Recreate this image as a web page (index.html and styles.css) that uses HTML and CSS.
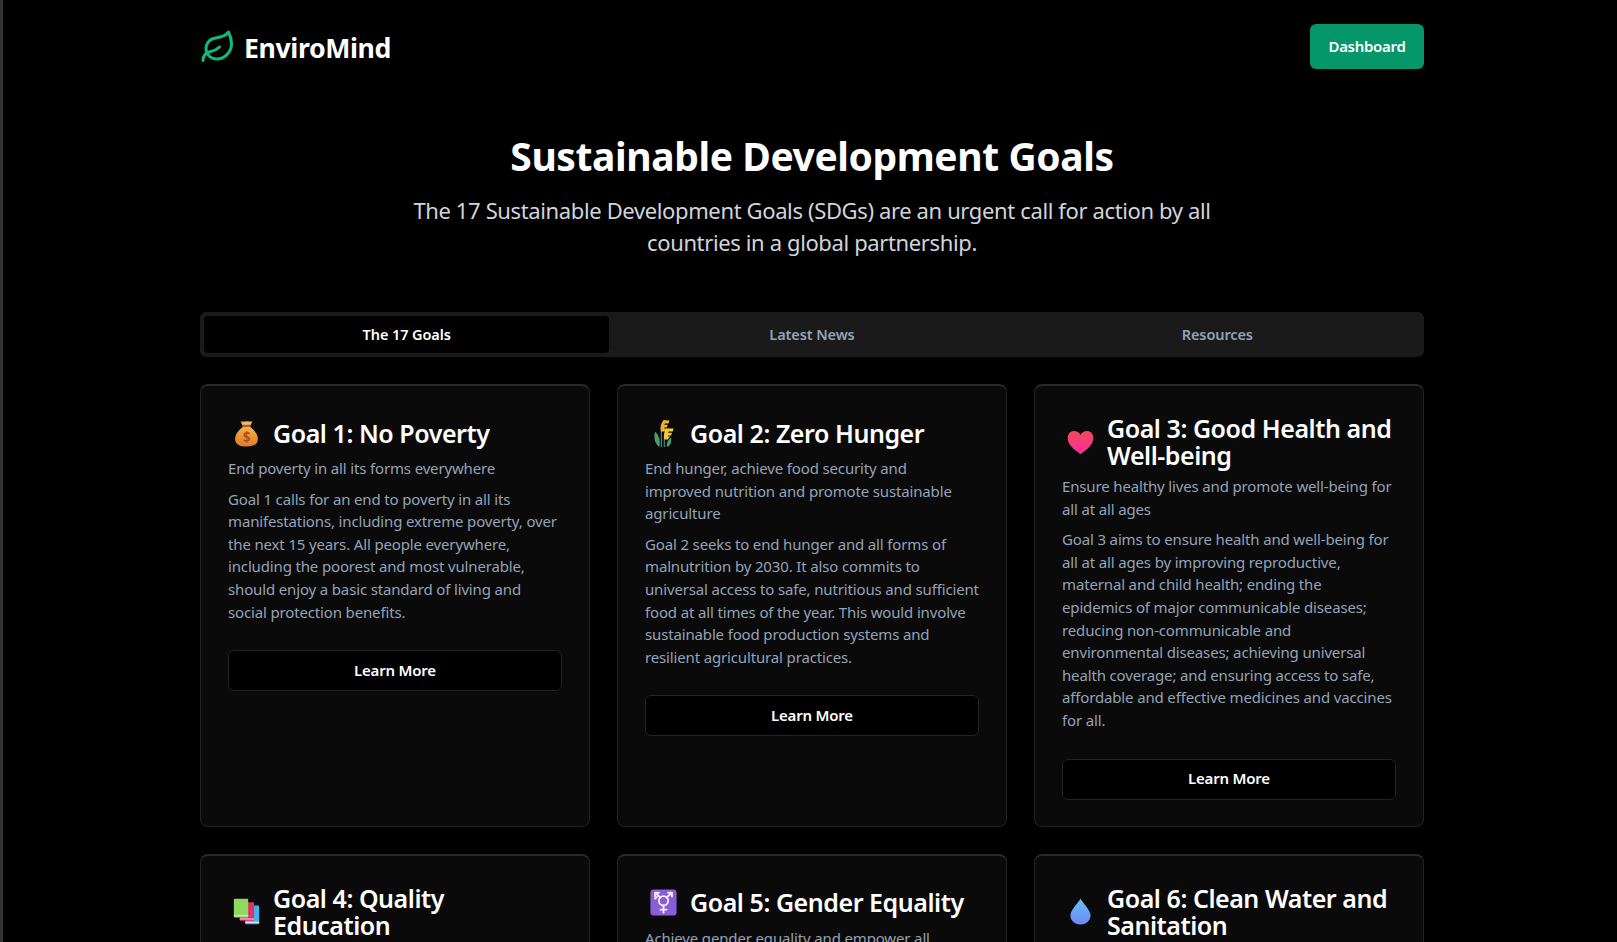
FILE: index.html
```html
<!DOCTYPE html>
<html lang="en">
<head>
  <meta charset="UTF-8">
  <meta name="viewport" content="width=device-width, initial-scale=1.0">
  <title>EnviroMind - Sustainable Development Goals</title>
  <link rel="stylesheet" href="styles.css">
</head>
<body>
  <div class="page">
    <!-- Header -->
    <header class="site-header">
      <a class="brand" href="#">
        <svg class="brand-icon" viewBox="0 0 24 24" fill="none" stroke="currentColor" stroke-width="2" stroke-linecap="round" stroke-linejoin="round">
          <path d="M11 20A7 7 0 0 1 9.8 6.1C15.5 5 17 4.48 19 2c1 2 2 4.18 2 8 0 5.5-4.78 10-10 10Z"/>
          <path d="M2 21c0-3 1.85-5.36 5.08-6C9.5 14.52 12 13 13 12"/>
        </svg>
        <span class="brand-name">EnviroMind</span>
      </a>
      <a class="dash-button" href="#">Dashboard</a>
    </header>

    <!-- Intro -->
    <section class="intro">
      <h1>Sustainable Development Goals</h1>
      <p>The 17 Sustainable Development Goals (SDGs) are an urgent call for action by all countries in a global partnership.</p>
    </section>

    <!-- Tabs -->
    <nav class="tabs">
      <button class="tab active">The 17 Goals</button>
      <button class="tab">Latest News</button>
      <button class="tab">Resources</button>
    </nav>

    <!-- Goals -->
    <main class="goal-grid">
      <article class="goal-card">
        <div class="goal-head">
          <svg class="goal-icon" viewBox="0 0 32 32">
            <defs>
              <linearGradient id="bag-fill" x1="0" y1="0" x2="0" y2="1">
                <stop offset="0" stop-color="#f7b048"/>
                <stop offset="1" stop-color="#e07a2c"/>
              </linearGradient>
            </defs>
            <path d="M11 6 9 1.500c2.500 1 4.500 .3 7 0s4.500 .8 7 0L21 6Z" fill="#f4b860"/>
            <path d="M12 8C7 11.500 2.500 17 2.500 22.500 2.500 29 8 31.500 16 31.500S29.500 29 29.500 22.500C29.500 17 25 11.500 20 8Z" fill="url(#bag-fill)"/>
            <rect x="11" y="5.600" width="10" height="2.800" rx="1.200" fill="#a9602c"/>
            <text x="16" y="26" class="bag-mark">$</text>
          </svg>
          <h2>Goal 1: No Poverty</h2>
        </div>
        <p class="goal-lead">End poverty in all its forms everywhere</p>
        <p class="goal-text">Goal 1 calls for an end to poverty in all its manifestations, including extreme poverty, over the next 15 years. All people everywhere, including the poorest and most vulnerable, should enjoy a basic standard of living and social protection benefits.</p>
        <button class="learn-button">Learn More</button>
      </article>

      <article class="goal-card">
        <div class="goal-head">
          <svg class="goal-icon" viewBox="0 0 32 32">
            <path d="M11 32C6 29 4 21 6 14c4 3 7 10 5 18Z" fill="#4f9a68"/>
            <path d="M20 32c4-1 6-6 5-11-3 1-6 6-5 11Z" fill="#4f9a68"/>
            <path d="M13.500 32V12M17 32V20" stroke="#2f8f88" stroke-width="1.400" fill="none"/>
            <path d="M13 14c-1.500-5 0-10 3-14l7 .5-1 3.500h-4.500l-.5 1.500H21l-1 3.500h-3v1h2.500l-2 3.500Z" fill="#eeb02f"/>
            <path d="M17 23c-1.500-5 0-9 2-13h9l-1 3.500h-5l-.5 1.500H26l-1 3.500h-3.500v1h2.500l-3 3.500Z" fill="#f7c63f"/>
          </svg>
          <h2>Goal 2: Zero Hunger</h2>
        </div>
        <p class="goal-lead">End hunger, achieve food security and<br>improved nutrition and promote sustainable<br>agriculture</p>
        <p class="goal-text">Goal 2 seeks to end hunger and all forms of malnutrition by 2030. It also commits to universal access to safe, nutritious and sufficient food at all times of the year. This would involve sustainable food production systems and resilient agricultural practices.</p>
        <button class="learn-button">Learn More</button>
      </article>

      <article class="goal-card">
        <div class="goal-head">
          <svg class="goal-icon" viewBox="0 0 32 32">
            <defs>
              <linearGradient id="heart-fill" x1="0" y1="0" x2="0" y2="1">
                <stop offset="0" stop-color="#f4475f"/>
                <stop offset="1" stop-color="#f2309a"/>
              </linearGradient>
            </defs>
            <path d="M16 30C8 24 .800 19 .800 10.500 .800 5.500 4.500 2.500 8.500 2.500c3.200 0 6 1.700 7.500 4.500 1.500-2.800 4.300-4.500 7.500-4.500 4 0 7.700 3 7.700 8 0 8.500-7.200 13.500-15.200 19.500Z" fill="url(#heart-fill)"/>
          </svg>
          <h2>Goal 3: Good Health and Well-being</h2>
        </div>
        <p class="goal-lead">Ensure healthy lives and promote well-being for all at all ages</p>
        <p class="goal-text">Goal 3 aims to ensure health and well-being for all at all ages by improving reproductive, maternal and child health; ending the<br>epidemics of major communicable diseases;<br>reducing non-communicable and<br>environmental diseases; achieving universal<br>health coverage; and ensuring access to safe,<br>affordable and effective medicines and vaccines<br>for all.</p>
        <button class="learn-button">Learn More</button>
      </article>

      <article class="goal-card">
        <div class="goal-head">
          <svg class="goal-icon" viewBox="0 0 32 32">
            <rect x="14.500" y="9" width="16.500" height="22" rx="1" fill="#3eb4ee"/>
            <rect x="14.500" y="28" width="16.500" height="1.800" fill="#e3d4ee"/>
            <rect x="8" y="5" width="17" height="22" rx="1" fill="#e0326c"/>
            <rect x="8" y="24" width="17" height="1.800" fill="#f0a0c0"/>
            <rect x="1" y="1" width="17" height="22" rx="1" fill="#8fd95f"/>
            <rect x="1" y="20" width="17" height="1.800" fill="#d5dcd0"/>
          </svg>
          <h2>Goal 4: Quality Education</h2>
        </div>
        <p class="goal-lead">Ensure inclusive and equitable quality education</p>
      </article>

      <article class="goal-card">
        <div class="goal-head">
          <svg class="goal-icon" viewBox="0 0 32 32">
            <rect x="0.500" y="0.500" width="31" height="31" rx="4" fill="#8a5cd6"/>
            <g fill="none" stroke="#f3ecfb" stroke-width="2.200" stroke-linecap="round">
              <circle cx="16" cy="14" r="5.500"/>
              <path d="M16 19.500V28M12.500 24.500h7M12.500 10 6.500 5M19.500 10l6-5M6 4.500h4.500M6 4.500V9M26 4.500h-4.500M26 4.500V9M8 9.500 6 11.500"/>
            </g>
          </svg>
          <h2>Goal 5: Gender Equality</h2>
        </div>
        <p class="goal-lead">Achieve gender equality and empower all women and girls</p>
      </article>

      <article class="goal-card">
        <div class="goal-head">
          <svg class="goal-icon" viewBox="0 0 32 32">
            <defs>
              <linearGradient id="drop-fill" x1="0" y1="0" x2="0" y2="1">
                <stop offset="0" stop-color="#62c4f5"/>
                <stop offset="1" stop-color="#6f86f7"/>
              </linearGradient>
            </defs>
            <path d="M16 .500c2 5 12 13 12 20.500a12 10.500 0 0 1-24 0C4 13.500 14 5.500 16 .500Z" fill="url(#drop-fill)"/>
          </svg>
          <h2>Goal 6: Clean Water and Sanitation</h2>
        </div>
        <p class="goal-lead">Ensure availability and sustainable management of water</p>
      </article>
    </main>
  </div>
</body>
</html>
```

FILE: styles.css
```css
/* General Styles */
html, body {
  height: 100%;
  overflow: hidden;
}

body {
  font-family: "Noto Sans", "Open Sans", sans-serif;
  margin: 0;
  background-color: #000;
  color: #fff;
  border-left: 3px solid #333;
}

.page {
  width: 1224px;
  margin-left: 197px;
}

/* Header */
.site-header {
  display: flex;
  align-items: center;
  justify-content: space-between;
  padding: 24px 0 0;
  height: 45px;
}

.brand {
  display: flex;
  align-items: center;
  gap: 8px;
  color: #fff;
  text-decoration: none;
  font-size: 26.7px;
  font-weight: 700;
  letter-spacing: -0.4px;
}

.brand-name {
  padding-top: 1px;
}

.brand-icon {
  width: 36px;
  height: 36px;
  color: #10b981;
}

.dash-button {
  display: block;
  width: 114px;
  height: 45px;
  line-height: 45px;
  text-align: center;
  background-color: #059669;
  border-radius: 6px;
  color: #fff;
  font-size: 15px;
  font-weight: 600;
  letter-spacing: -0.3px;
  text-decoration: none;
}

/* Intro */
.intro {
  text-align: center;
  margin-top: 63px;
}

.intro h1 {
  margin: 0;
  font-size: 39px;
  line-height: 48px;
  font-weight: 700;
  letter-spacing: -0.4px;
}

.intro p {
  width: 840px;
  margin: 14px auto 0;
  font-size: 22px;
  line-height: 32px;
  letter-spacing: -0.37px;
  color: #d1d5db;
}

/* Tabs */
.tabs {
  display: grid;
  grid-template-columns: repeat(3, 1fr);
  margin-top: 54px;
  padding: 4px;
  height: 37px;
  background-color: #1a1a1a;
  border-radius: 6px;
}

.tab {
  font-family: inherit;
  font-size: 14.5px;
  font-weight: 600;
  letter-spacing: -0.1px;
  color: #94a3b8;
  background: none;
  border: none;
  border-radius: 4px;
  padding: 0 0 2px;
}

.tab.active {
  background-color: #000;
  color: #fff;
}

/* Goal cards */
.goal-grid {
  display: grid;
  grid-template-columns: repeat(3, 390px);
  gap: 27px;
  margin-top: 27px;
}

.goal-card {
  display: flex;
  flex-direction: column;
  align-items: stretch;
  box-sizing: border-box;
  min-height: 442px;
  padding: 28px 27px 26px;
  background-color: #0a0a0a;
  border: 1px solid #222;
  border-top: 2px solid #2a2a2a;
  border-radius: 8px;
}

.goal-head {
  display: flex;
  align-items: center;
  gap: 13px;
  min-height: 38px;
  padding-left: 5px;
}

.goal-icon {
  flex: none;
  width: 27px;
  height: 27px;
}

.bag-mark {
  font-size: 16px;
  font-weight: 700;
  fill: #a8521f;
  text-anchor: middle;
}

.goal-head h2 {
  margin: 0;
  padding: 1px 0;
  font-size: 25px;
  line-height: 27px;
  font-weight: 600;
  letter-spacing: -0.45px;
}

.goal-lead,
.goal-text {
  margin: 0;
  font-size: 15px;
  line-height: 22.6px;
  letter-spacing: -0.15px;
  color: #94a3b8;
}

.goal-lead {
  margin-top: 5px;
}

.goal-text {
  margin-top: 8px;
}

.learn-button {
  margin-top: 27px;
  height: 41px;
  padding: 0 0 2px;
  font-family: inherit;
  font-size: 15px;
  font-weight: 600;
  letter-spacing: -0.2px;
  color: #fff;
  background-color: #000;
  border: 1px solid #222;
  border-radius: 6px;
}
```
